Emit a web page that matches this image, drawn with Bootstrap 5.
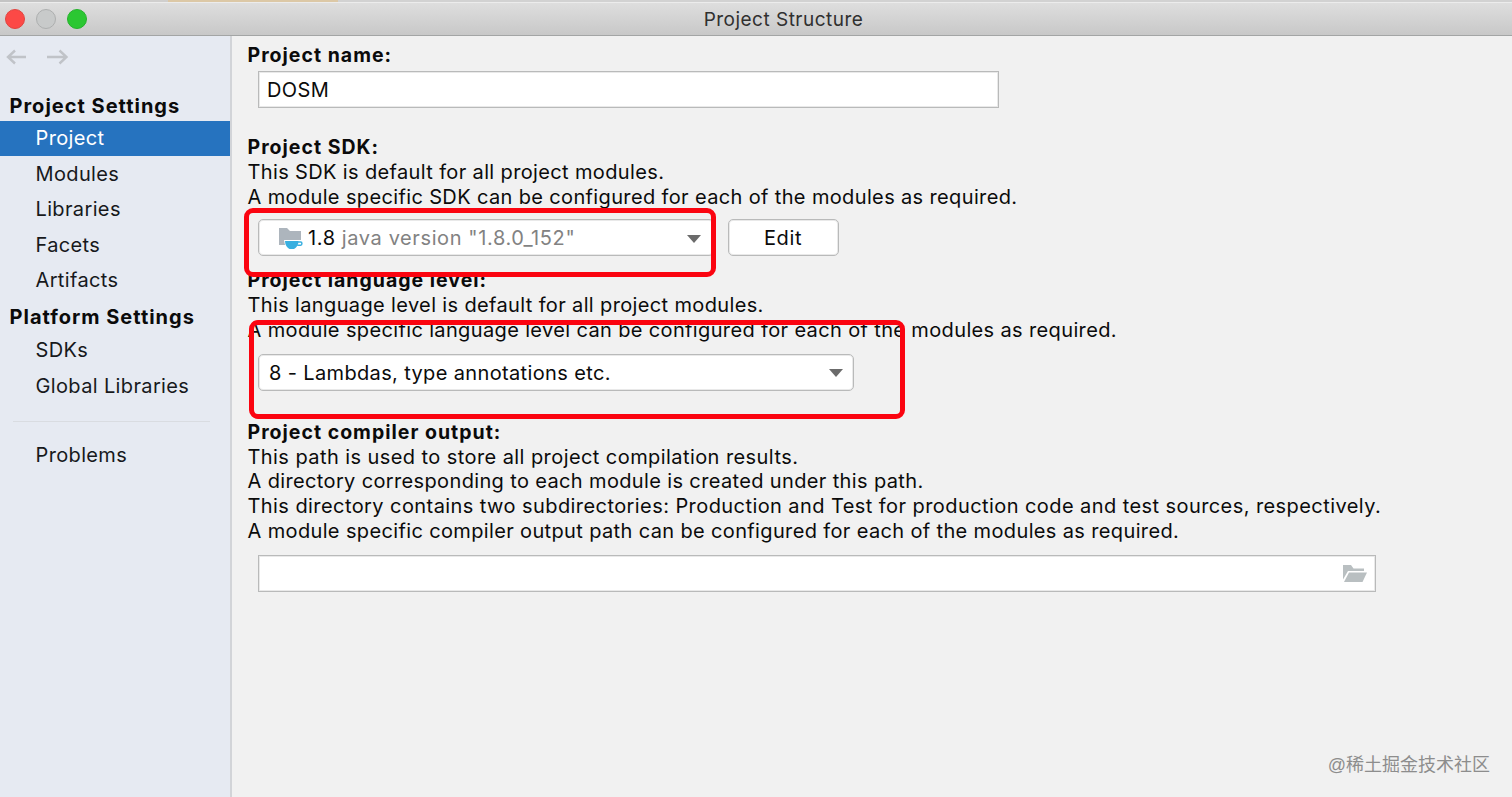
<!DOCTYPE html>
<html lang="en">
  <head>
    <meta charset="UTF-8" />
    <meta name="viewport" content="width=device-width, initial-scale=1.0" />
    <title>Project Structure</title>
    <link
      href="https://cdn.jsdelivr.net/npm/bootstrap@5.3.3/dist/css/bootstrap.min.css"
      rel="stylesheet"
    />
    <style>
      body {
        font-family: Inter, "Liberation Sans", sans-serif;
        font-size: 20px;
        line-height: 24.75px;
        letter-spacing: 0.36px;
        color: #0b0b0b;
        background: #f1f1f1;
      }
      .behind {
        height: 2px;
        background: linear-gradient(90deg, #c4c4c4 0 140px, #d0cfce 140px 168px, #dcc8a6 168px 338px, #d2d2d2 338px);
      }
      .titlebar {
        height: 34px;
        background: linear-gradient(#dedede, #c8c8c8);
        border-top: 1px solid #ececec;
        border-bottom: 1px solid #a3a5a5;
      }
      .window-title {
        font-size: 19px;
        letter-spacing: 0.48px;
        color: #303030;
        padding: 2px 0 0 55px;
      }
      .dots {
        left: 5px;
        gap: 11px;
      }
      .dot {
        width: 20px;
        height: 20px;
        border: 1px solid #e0443f;
        background: #fc4946;
      }
      .dot-off {
        background: #c8caca;
        border-color: #adafaf;
      }
      .dot-zoom {
        background: #2bc732;
        border-color: #25b22c;
      }
      .sidebar {
        width: 232px;
        background: #e6eaf2;
        border-right: 2px solid #d2d4d8;
      }
      .history {
        height: 53.5px;
        padding: 12px 0 0 6px;
        gap: 19px;
      }
      .group-title {
        height: 31px;
        padding: 2px 0 0 9.5px;
        font-weight: 700;
        font-size: 20px;
        letter-spacing: 1px;
      }
      .group-title.second {
        height: 34.5px;
        padding-top: 4px;
      }
      .side-item {
        height: 35.5px;
        padding: 1px 0 0 35.5px;
        color: #17191c;
        text-decoration: none;
      }
      .side-item.selected {
        background: #2673bf;
        color: #fff;
      }
      .divider {
        height: 1px;
        margin: 17px 20px 15.5px 13px;
        background: #d9dce1;
      }
      .content {
        padding: 6.5px 0 0 15.5px;
      }
      .section-title {
        font-weight: 700;
        font-size: 19.5px;
        letter-spacing: 1px;
      }
      .line {
        white-space: nowrap;
      }
      .wide-line {
        letter-spacing: 0.425px;
      }
      .field {
        height: 37px;
        margin-left: 10.5px;
        padding-top: 2px;
        background: #fff;
        border: 1px solid #b9baba;
        box-shadow: inset 0 0 0 1px #e9e9e9;
      }
      .combo {
        border-radius: 5px;
      }
      .name-field {
        width: 741px;
        margin-top: 4px;
        margin-bottom: 27px;
        padding-left: 8px;
      }
      .sdk-row {
        margin: 9.5px 0 12px;
      }
      .sdk-combo {
        width: 456px;
        padding: 2px 12px 0 19px;
        letter-spacing: 0.6px;
      }
      .edit-btn {
        width: 111px;
        margin-left: 13.5px;
        letter-spacing: 0.6px;
      }
      .level-combo {
        width: 596px;
        margin-top: 11.5px;
        margin-bottom: 29px;
        padding: 2px 10px 0;
      }
      .path-field {
        width: 1118px;
        margin-top: 11px;
        padding-right: 8px;
      }
      .muted {
        color: #828282;
      }
      .marker {
        border: 5px solid #fb0410;
        border-radius: 9px;
        pointer-events: none;
      }
      .marker-sdk {
        left: 243.5px;
        top: 208px;
        width: 472px;
        height: 69px;
      }
      .marker-level {
        left: 248.5px;
        top: 320px;
        width: 656px;
        height: 99px;
      }
      .watermark {
        right: 22px;
        bottom: 19px;
        font-family: "Liberation Sans", "Noto Sans CJK SC", sans-serif;
        font-size: 18px;
        letter-spacing: 0;
        color: #8d8d8d;
      }
    </style>
  </head>

  <body class="vh-100 overflow-hidden position-relative d-flex flex-column">
    <div class="behind flex-shrink-0"></div>
    <header class="titlebar flex-shrink-0 d-flex align-items-center justify-content-center position-relative">
      <div class="dots d-flex position-absolute">
        <span class="dot rounded-circle"></span>
        <span class="dot dot-off rounded-circle"></span>
        <span class="dot dot-zoom rounded-circle"></span>
      </div>
      <span class="window-title">Project Structure</span>
    </header>

    <div class="d-flex flex-grow-1">
      <nav class="sidebar flex-shrink-0">
        <div class="history d-flex">
          <svg width="22" height="18" viewBox="0 0 22 18" fill="none" stroke="#c0c3c8" stroke-width="2.4">
            <path d="M20 9H2M9 2.500L2 9l7 6.500" />
          </svg>
          <svg width="22" height="18" viewBox="0 0 22 18" fill="none" stroke="#c0c3c8" stroke-width="2.4">
            <path d="M0 9h19M12.500 2.500l7 6.500-7 6.500" />
          </svg>
        </div>
        <div class="group-title d-flex align-items-center">Project Settings</div>
        <a class="side-item selected d-flex align-items-center">Project</a>
        <a class="side-item d-flex align-items-center">Modules</a>
        <a class="side-item d-flex align-items-center">Libraries</a>
        <a class="side-item d-flex align-items-center">Facets</a>
        <a class="side-item d-flex align-items-center">Artifacts</a>
        <div class="group-title second d-flex align-items-center">Platform Settings</div>
        <a class="side-item d-flex align-items-center">SDKs</a>
        <a class="side-item d-flex align-items-center">Global Libraries</a>
        <div class="divider"></div>
        <a class="side-item d-flex align-items-center">Problems</a>
      </nav>

      <main class="content flex-grow-1">
        <div class="section-title">Project name:</div>
        <div class="field name-field d-flex align-items-center">DOSM</div>

        <div class="section-title">Project SDK:</div>
        <div class="line">This SDK is default for all project modules.</div>
        <div class="line">A module specific SDK can be configured for each of the modules as required.</div>
        <div class="sdk-row d-flex">
          <div class="field combo sdk-combo d-flex align-items-center">
            <svg width="26" height="24" viewBox="0 0 26 24">
              <path d="M1 1h8l3 3h11v14H1z" fill="#adb5bd" />
              <path d="M6 13h19v6h-4q-1 3-4 4h-6q-4-2-5-10z" fill="#fff" />
              <path d="M7 14h13.500c0 4-2 6.500-4.500 8h-4.500C9 20.500 7 18 7 14z" fill="#38afe0" />
              <path d="M19.500 15h3.200q1.200 0 1.200 1.600t-1.200 1.600h-3.500" fill="none" stroke="#38afe0" stroke-width="1.500" />
            </svg>
            <span class="ms-1">1.8 <span class="muted">java version "1.8.0_152"</span></span>
            <svg class="ms-auto" width="14" height="8" viewBox="0 0 14 8">
              <path d="M0 0h14L7 8z" fill="#6b6b6b" />
            </svg>
          </div>
          <div class="field combo edit-btn d-flex align-items-center justify-content-center">Edit</div>
        </div>

        <div class="section-title">Project language level:</div>
        <div class="line">This language level is default for all project modules.</div>
        <div class="line">A module specific language level can be configured for each of the modules as required.</div>
        <div class="field combo level-combo d-flex align-items-center">
          <span>8 - Lambdas, type annotations etc.</span>
          <svg class="ms-auto" width="14" height="8" viewBox="0 0 14 8">
            <path d="M0 0h14L7 8z" fill="#6b6b6b" />
          </svg>
        </div>

        <div class="section-title">Project compiler output:</div>
        <div class="line wide-line">This path is used to store all project compilation results.</div>
        <div class="line">A directory corresponding to each module is created under this path.</div>
        <div class="line wide-line">This directory contains two subdirectories: Production and Test for production code and test sources, respectively.</div>
        <div class="line">A module specific compiler output path can be configured for each of the modules as required.</div>
        <div class="field path-field d-flex align-items-center justify-content-end">
          <svg width="24" height="18" viewBox="0 0 24 18" fill="#b9bfc1">
            <path d="M0 0h8l2.500 3.500H21V6H5L0 14.500z" />
            <path d="M6 7.500h18L19.500 17H1z" />
          </svg>
        </div>
      </main>
    </div>

    <!-- highlight frames over the two combo boxes -->
    <div class="marker marker-sdk position-absolute"></div>
    <div class="marker marker-level position-absolute"></div>
    <div class="watermark position-absolute">@稀土掘金技术社区</div>

    <script src="https://cdn.jsdelivr.net/npm/bootstrap@5.3.3/dist/js/bootstrap.bundle.min.js"></script>
  </body>
</html>
